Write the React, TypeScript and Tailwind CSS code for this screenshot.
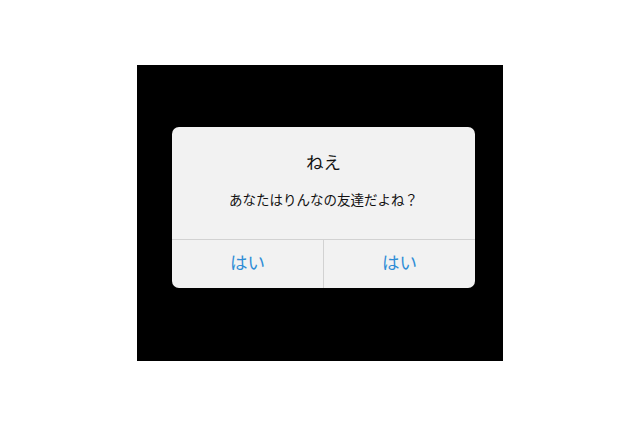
export default function App() {
  return (
    <div
      className="w-[640px] h-[426px] bg-white overflow-hidden pt-[65px]"
      style={{ fontFamily: '"Noto Sans CJK JP", "Noto Sans", sans-serif' }}
    >
      <div className="ml-[137px] w-[366px] h-[296px] bg-black pt-[62px] pl-[35px]">
        <div className="w-[303px] h-[161px] bg-[#f2f2f2] rounded-[7px] overflow-hidden flex flex-col">
          <div className="h-[112px] flex flex-col items-center">
            <div className="mt-[23px] text-[17.5px] leading-[24px] text-[#111]">ねえ</div>
            <div className="mt-[15px] text-[13.5px] leading-[20px] text-[#111]">あなたはりんなの友達だよね？</div>
          </div>
          <div className="flex-1 flex border-t border-[#d2d2d2]">
            <div className="flex-1 flex items-center justify-center pb-[3px] text-[17.5px] text-[#2f8dd6] border-r border-[#d2d2d2]">はい</div>
            <div className="flex-1 flex items-center justify-center pb-[3px] text-[17.5px] text-[#2f8dd6]">はい</div>
          </div>
        </div>
      </div>
    </div>
  )
}
